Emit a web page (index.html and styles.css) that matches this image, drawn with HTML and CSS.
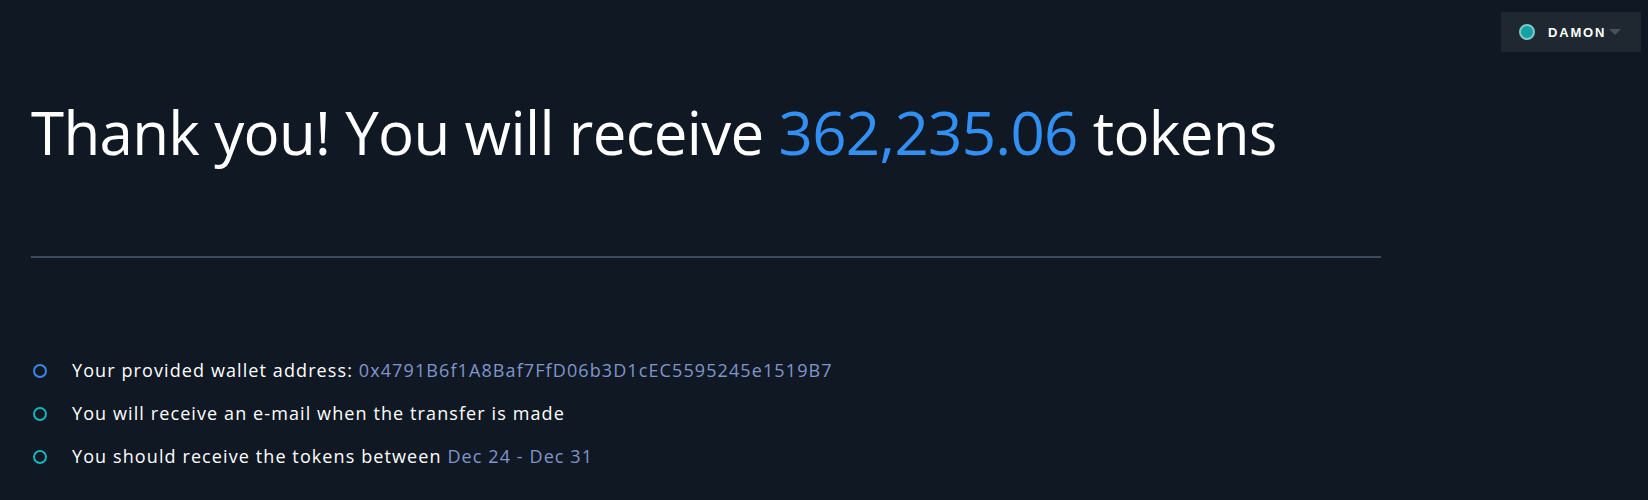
FILE: index.html
```html
<!DOCTYPE html>
<html>
<head>
<meta charset="utf-8">
<link rel="stylesheet" href="styles.css">
</head>
<body>
<div class="page">
  <header class="topbar">
    <button class="user">
      <span class="user-dot"></span>
      <span class="user-name">DAMON</span>
      <span class="caret"></span>
    </button>
  </header>
  <main class="content">
    <h1 class="title">Thank you! You will receive <span class="amount">362,235.06</span> tokens</h1>
    <hr class="divider">
    <ul class="info">
      <li class="info-item blue">Your provided wallet address: <span class="muted">0x4791B6f1A8Baf7FfD06b3D1cEC5595245e1519B7</span></li>
      <li class="info-item teal">You will receive an e-mail when the transfer is made</li>
      <li class="info-item teal">You should receive the tokens between <span class="muted">Dec 24 - Dec 31</span></li>
    </ul>
  </main>
</div>
</body>
</html>
```
FILE: styles.css
```css
html, body {
  margin: 0;
  padding: 0;
  background: #101923;
  height: 100%;
}
body {
  font-family: "Open Sans", "Noto Sans", "Noto Sans CJK SC", sans-serif;
  color: #ffffff;
}
.page {
  width: 1648px;
  height: 500px;
  overflow: hidden;
}
.topbar {
  display: flex;
  justify-content: flex-end;
  padding: 12px 7px 0 0;
}
.user {
  display: flex;
  align-items: center;
  width: 140px;
  height: 40px;
  padding: 0 0 0 18px;
  background: #1f2731;
  border: none;
  color: #fff;
  font-family: "Liberation Sans", Arial, sans-serif;
  cursor: pointer;
}
.user-dot {
  width: 12px;
  height: 12px;
  border-radius: 50%;
  background: #14a0a4;
  border: 2px solid #7ec9cc;
}
.user-name {
  margin-left: 13px;
  font-size: 13px;
  font-weight: bold;
  letter-spacing: 1.8px;
}
.caret {
  margin-left: 3px;
  width: 0;
  height: 0;
  border-left: 6px solid transparent;
  border-right: 6px solid transparent;
  border-top: 6px solid #4a5058;
}
.content {
  padding: 0 0 0 31px;
}
.title {
  margin: 40px 0 0 0;
  font-size: 60px;
  font-weight: 400;
  line-height: 80px;
  letter-spacing: -0.66px;
}
.amount {
  color: #3290f5;
}
.divider {
  width: 1350px;
  margin: 84px 0 0 0;
  border: none;
  height: 2px;
  background: #3e4a58;
}
.info {
  list-style: none;
  margin: 100px 0 0 0;
  padding: 0;
  display: flex;
  flex-direction: column;
  gap: 18px;
}
.info-item {
  display: flex;
  align-items: center;
  font-size: 18px;
  line-height: 25px;
  font-weight: 500;
  letter-spacing: 1.1px;
  white-space: pre;
}
.info-item::before {
  content: "";
  width: 10px;
  height: 10px;
  border-radius: 50%;
  border: 2px solid currentColor;
  margin: 0 25px 0 2px;
  flex: none;
}
.info-item.blue::before { border-color: #3a86e8; }
.info-item.teal::before { border-color: #17b2bb; }
.muted {
  color: #8095cc;
  font-weight: 400;
}
```
